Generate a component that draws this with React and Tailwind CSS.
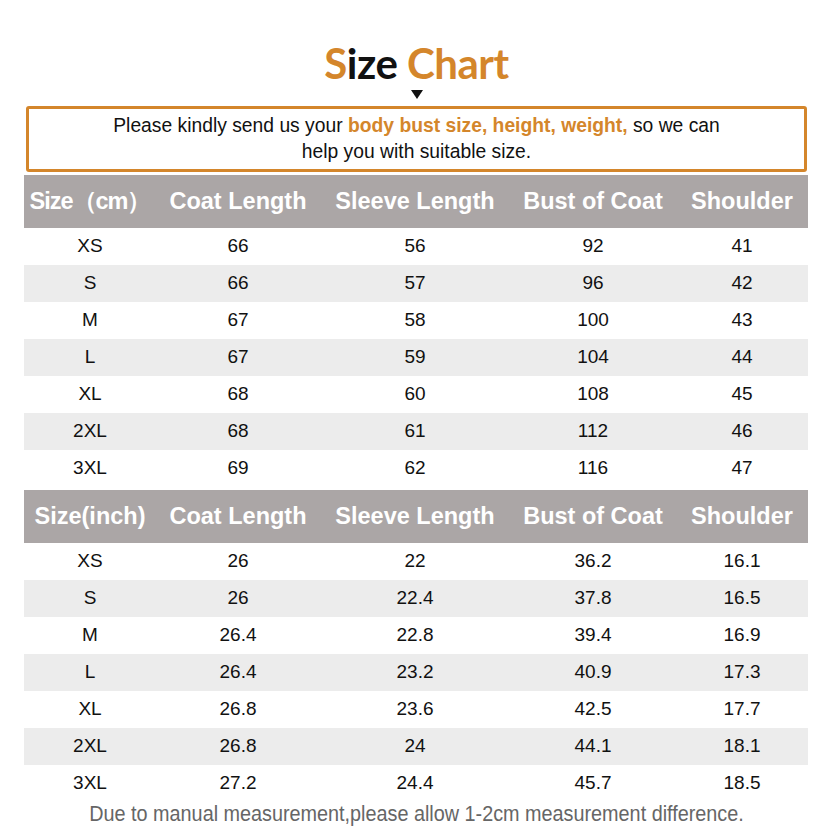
import React from "react";

const cols = ["w-[132px]", "w-[164px]", "w-[190px]", "w-[166px]", "w-[132px]"];

const cmRows = [
  ["XS", "66", "56", "92", "41"],
  ["S", "66", "57", "96", "42"],
  ["M", "67", "58", "100", "43"],
  ["L", "67", "59", "104", "44"],
  ["XL", "68", "60", "108", "45"],
  ["2XL", "68", "61", "112", "46"],
  ["3XL", "69", "62", "116", "47"],
];

const inchRows = [
  ["XS", "26", "22", "36.2", "16.1"],
  ["S", "26", "22.4", "37.8", "16.5"],
  ["M", "26.4", "22.8", "39.4", "16.9"],
  ["L", "26.4", "23.2", "40.9", "17.3"],
  ["XL", "26.8", "23.6", "42.5", "17.7"],
  ["2XL", "26.8", "24", "44.1", "18.1"],
  ["3XL", "27.2", "24.4", "45.7", "18.5"],
];

const SizeTable = ({ first, firstClass = "", rows }) => {
  const heads = [first, "Coat Length", "Sleeve Length", "Bust of Coat", "Shoulder"];
  return (
    <div className="ml-[24px] w-[784px]">
      {/* header */}
      <div className="flex h-[53px] items-center bg-[#aba6a6] text-[23.5px] font-bold text-white">
        {heads.map((h, i) => (
          <div
            key={i}
            className={`${cols[i]} text-center whitespace-nowrap ${i === 0 ? firstClass : ""}`}
          >
            {h}
          </div>
        ))}
      </div>
      {rows.map((r, ri) => (
        <div
          key={ri}
          className={`flex h-[37px] items-center text-[19px] text-[#111] ${
            ri % 2 === 1 ? "bg-[#ececec]" : "bg-white"
          }`}
        >
          {r.map((c, ci) => (
            <div key={ci} className={`${cols[ci]} text-center`}>
              {c}
            </div>
          ))}
        </div>
      ))}
    </div>
  );
};

export default function App() {
  return (
    <div className="w-[833px] h-[833px] bg-white font-['Liberation_Sans',Arial,sans-serif] overflow-hidden">
      {/* title */}
      <div className="flex flex-col items-center pt-[38px]">
        <h1 className="font-['Lato',sans-serif] text-[42px] font-bold leading-[50px] tracking-[-0.5px]">
          <span className="text-[#d4862b]">S</span>
          <span className="text-[#111]">ize </span>
          <span className="text-[#d4862b]">Chart</span>
        </h1>
        <div className="mt-[2px] h-0 w-0 border-x-[6px] border-t-[9px] border-x-transparent border-t-[#111]" />
      </div>

      {/* notice box */}
      <div className="ml-[26px] mt-[7px] flex h-[66px] w-[781px] flex-col items-center justify-center rounded-[3px] border-[3px] border-[#d4862b] text-[19.3px] leading-[26px] text-[#111]">
        <p>
          Please kindly send us your{" "}
          <span className="font-bold text-[#d4862b]">body bust size, height, weight,</span> so we can
        </p>
        <p>help you with suitable size.</p>
      </div>

      <div className="mt-[3px]">
        <SizeTable first="Size（cm）" firstClass="tracking-[-1px]" rows={cmRows} />
      </div>
      <div className="mt-[3px]">
        <SizeTable first="Size(inch)" rows={inchRows} />
      </div>

      <p className="mt-[0px] text-center text-[22px] leading-[24px] text-[#666] scale-x-[0.9]">
        Due to manual measurement,please allow 1-2cm measurement difference.
      </p>
    </div>
  );
}
